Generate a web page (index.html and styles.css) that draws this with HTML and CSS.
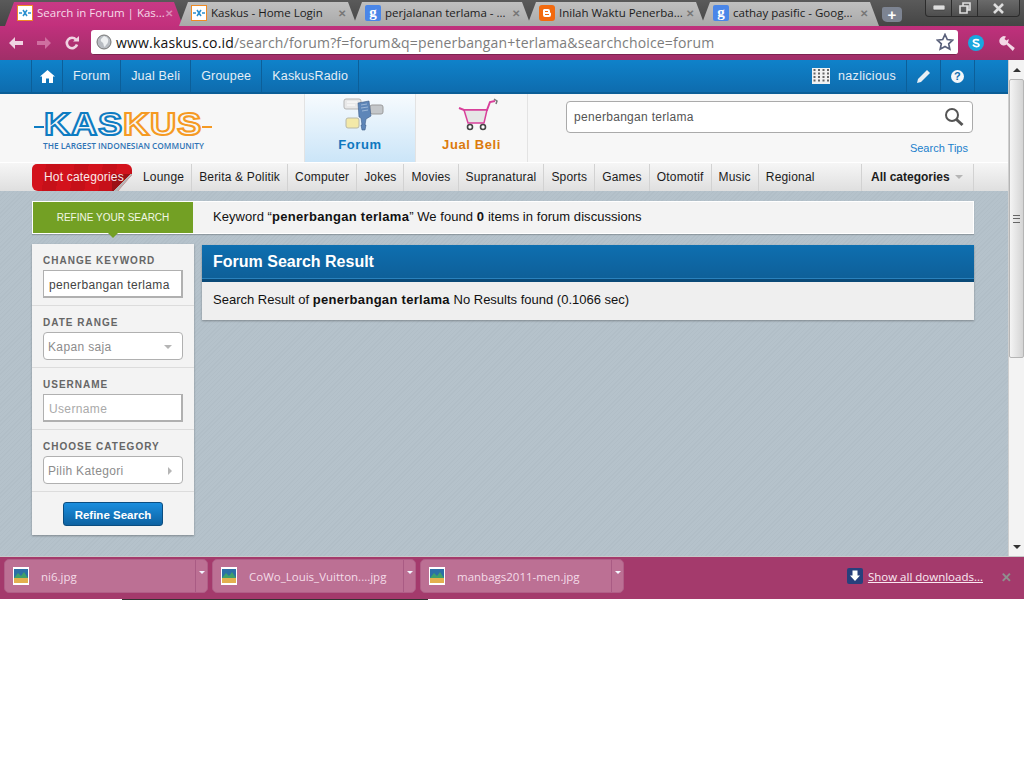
FILE: index.html
```html
<!DOCTYPE html>
<html lang="en">
<head>
    <meta charset="UTF-8">
    <title>Search in Forum | Kaskus</title>
    <link rel="stylesheet" href="styles.css">
</head>
<body>
    <div class="browser">
        <div class="tabstrip">
            <div class="tab active">
                <svg class="favicon" viewBox="0 0 16 16"><rect x="0.5" y="0.5" width="15" height="15" fill="#fff" stroke="#f08a24"/><path d="M2 8h3M11 8h3M6 5l4 6M10 5l-4 6" stroke="#2a8fd0" stroke-width="1.5" fill="none"/></svg>
                <span class="tab-title">Search in Forum | Kas...</span><span class="tab-x">✕</span>
            </div>
            <div class="tab">
                <svg class="favicon" viewBox="0 0 16 16"><rect x="0.5" y="0.5" width="15" height="15" fill="#fff" stroke="#f08a24"/><path d="M2 8h3M11 8h3M6 5l4 6M10 5l-4 6" stroke="#2a8fd0" stroke-width="1.5" fill="none"/></svg>
                <span class="tab-title">Kaskus - Home Login</span><span class="tab-x">✕</span>
            </div>
            <div class="tab">
                <span class="favicon g-icon">g</span>
                <span class="tab-title">perjalanan terlama - ...</span><span class="tab-x">✕</span>
            </div>
            <div class="tab">
                <svg class="favicon" viewBox="0 0 16 16"><rect width="16" height="16" rx="3" fill="#f26a0f"/><path d="M5 4h4a2 2 0 0 1 2 2v1a1 1 0 0 0 1 1v2a2 2 0 0 1-2 2H6a2 2 0 0 1-2-2V5z" fill="#fff"/><path d="M6 6.500h3M6 9.500h4" stroke="#f26a0f" stroke-width="1.2"/></svg>
                <span class="tab-title">Inilah Waktu Penerba...</span><span class="tab-x">✕</span>
            </div>
            <div class="tab">
                <span class="favicon g-icon">g</span>
                <span class="tab-title">cathay pasific - Goog...</span><span class="tab-x">✕</span>
            </div>
            <div class="newtab">+</div>
            <div class="winctl">
                <div class="winbtn"><svg width="12" height="6" viewBox="0 0 12 6"><rect width="12" height="5" rx="1" fill="#ddd" stroke="#333" stroke-width=".6"/></svg></div>
                <div class="winbtn"><svg width="12" height="12" viewBox="0 0 12 12"><path d="M4 1h7v7H9V4H4zM1 4h7v7H1z" fill="none" stroke="#ddd" stroke-width="1.6"/></svg></div>
                <div class="winbtn wide"><svg width="13" height="11" viewBox="0 0 13 11"><path d="M2 1l9 9M11 1l-9 9" stroke="#ddd" stroke-width="2.6"/></svg></div>
            </div>
        </div>

        <div class="toolbar">
            <svg class="tool-icon" viewBox="0 0 16 16"><path d="M1 8l6-6v4h8v4H7v4z" fill="#f0d3e2"/></svg>
            <svg class="tool-icon" viewBox="0 0 16 16"><path d="M15 8L9 2v4H1v4h8v4z" fill="#cf6fa0"/></svg>
            <svg class="tool-icon" viewBox="0 0 16 16"><path d="M13 9.500A5.200 5.200 0 1 1 12 4.600" fill="none" stroke="#f0d3e2" stroke-width="2.6"/><path d="M9 6.500h6V1z" fill="#f0d3e2"/></svg>
            <div class="omnibox">
                <svg class="globe" viewBox="0 0 16 16"><circle cx="8" cy="8" r="7" fill="#b8bcc2" stroke="#777"/><path d="M8 2c3 1 5 3 4 6s-2 2-3 5c-2-1-1-3-2-4S4 7 5 5z" fill="#eef0f2"/></svg>
                <span class="url"><b>www.kaskus.co.id</b>/search/forum?f=forum&amp;q=penerbangan+terlama&amp;searchchoice=forum</span>
                <svg class="star" viewBox="0 0 18 18"><path d="M9 1.500l2.300 5 5.400.6-4 3.700 1.100 5.400L9 13.500l-4.800 2.700 1.100-5.400-4-3.700 5.400-.6z" fill="#fff" stroke="#59607a" stroke-width="1.7"/></svg>
            </div>
            <svg class="skype" viewBox="0 0 16 16"><circle cx="8" cy="8" r="8" fill="#18a8e0"/><path d="M11 5.500C10 4.300 5.500 4 5.500 6.200c0 2.300 5.500 1.300 5.500 3.800 0 2.200-4.800 2-6-.3" fill="none" stroke="#fff" stroke-width="1.8"/></svg>
            <svg class="wrench" viewBox="0 0 18 18"><path d="M2 3.500a4 4 0 0 1 5-1L5.500 5l2 1.500L9.500 5a4 4 0 0 1-.7 3.500l7 5.500-2 3-6.300-6.500A4 4 0 0 1 2 3.500z" fill="#f3d8e6"/></svg>
        </div>

        <div class="viewport">
            <div class="page">
                <div class="topnav">
                    <a class="topnav-item home"><svg width="15" height="13" viewBox="0 0 15 13"><path d="M7.500 0L15 6.500h-2V13H9V8.500H6V13H2V6.500H0z" fill="#fff"/></svg></a>
                    <a class="topnav-item">Forum</a>
                    <a class="topnav-item">Jual Beli</a>
                    <a class="topnav-item">Groupee</a>
                    <a class="topnav-item">KaskusRadio</a>
                    <div class="topnav-right">
                        <svg class="avatar" viewBox="0 0 18 16"><rect width="18" height="16" fill="#f2f2f2"/><path d="M2.500 1v14M7 1v14M11.500 1v14M16 1v14" stroke="#666" stroke-width="2" stroke-dasharray="2 1.500"/></svg>
                        <a class="topnav-user">nazlicious</a>
                        <a class="topnav-icon"><svg width="14" height="14" viewBox="0 0 14 14"><path d="M0 14l1-4L10 1l3 3-9 9z" fill="#e8eef4"/></svg></a>
                        <a class="topnav-icon"><span class="help">?</span></a>
                    </div>
                </div>

                <div class="header">
                    <div class="logo">
                        <div class="logo-mark">
                            <span class="logo-dash blue"></span>
                            <div class="logo-word"><span class="logo-text">KAS</span><span class="logo-text orange-text">KUS</span></div>
                            <span class="logo-dash orange"></span>
                        </div>
                        <div class="logo-tag">THE LARGEST INDONESIAN COMMUNITY</div>
                    </div>
                    <div class="channel channel-forum">
                        <svg class="channel-icon forum-icon" width="42" height="34" viewBox="0 0 42 34">
                            <rect x="1" y="1" width="17" height="10" rx="2" fill="#e8e8e8" stroke="#b5b5b5"/>
                            <path d="M4 4h10M4 7h8" stroke="#fff"/>
                            <rect x="27" y="7" width="13" height="9" rx="2" fill="#c4c7ca" stroke="#9b9b9b"/>
                            <rect x="3" y="20" width="13" height="10" rx="2" fill="#f3e9a8" stroke="#b8b8a8"/>
                            <path d="M15 5l11-2 2 15-5 3-1 6h1l-1 5h-3l-1-5h1l-1-7-2-1z" fill="#5e86b8" stroke="#3c5d88" stroke-width=".6"/>
                            <path d="M18 7l6-1M18 10l7-1M19 13l6-1" stroke="#9db8d8"/>
                        </svg>
                        <span class="channel-label forum-label">Forum</span>
                    </div>
                    <div class="channel">
                        <svg class="channel-icon cart-icon" width="42" height="34" viewBox="0 0 42 34">
                            <path d="M2 10l5 2h23l3-8 5-1" fill="none" stroke="#d8409a" stroke-width="2"/>
                            <path d="M37 1l3 2-1 3" fill="none" stroke="#777" stroke-width="1.500"/>
                            <path d="M7 12h23l-3 13H11z" fill="#e6e6e6" stroke="#d8409a" stroke-width="1.500"/>
                            <circle cx="13" cy="29" r="2.500" fill="#fff" stroke="#444" stroke-width="1.600"/>
                            <circle cx="26" cy="29" r="2.500" fill="#fff" stroke="#444" stroke-width="1.600"/>
                        </svg>
                        <span class="channel-label jual-label">Jual Beli</span>
                    </div>
                    <div class="header-search">
                        <div class="searchbox">
                            <span>penerbangan terlama</span>
                            <svg width="20" height="20" viewBox="0 0 20 20"><circle cx="8" cy="8" r="6" fill="#fff" stroke="#555" stroke-width="2"/><path d="M12.500 12.500l6 5.500" stroke="#555" stroke-width="3"/></svg>
                        </div>
                        <a class="search-tips">Search Tips</a>
                    </div>
                </div>

                <div class="catbar">
                    <a class="hot">Hot categories</a>
                    <a class="cat">Lounge</a>
                    <a class="cat">Berita &amp; Politik</a>
                    <a class="cat">Computer</a>
                    <a class="cat">Jokes</a>
                    <a class="cat">Movies</a>
                    <a class="cat">Supranatural</a>
                    <a class="cat">Sports</a>
                    <a class="cat">Games</a>
                    <a class="cat">Otomotif</a>
                    <a class="cat">Music</a>
                    <a class="cat regional">Regional</a>
                    <a class="cat all">All categories <i class="caret"></i></a>
                </div>

                <div class="content">
                    <div class="refine-bar">
                        <div class="refine-tag">REFINE YOUR SEARCH</div>
                        <div class="refine-text">Keyword “<b>penerbangan terlama</b>” We found <b>0</b> items in forum discussions</div>
                    </div>
                    <div class="columns">
                        <div class="sidebar">
                            <div class="side-group">
                                <div class="side-label">CHANGE KEYWORD</div>
                                <div class="field square dark">penerbangan terlama</div>
                            </div>
                            <div class="side-group">
                                <div class="side-label">DATE RANGE</div>
                                <div class="field rounded grey">Kapan saja <i class="caret"></i></div>
                            </div>
                            <div class="side-group">
                                <div class="side-label">USERNAME</div>
                                <div class="field square light">Username</div>
                            </div>
                            <div class="side-group">
                                <div class="side-label">CHOOSE CATEGORY</div>
                                <div class="field rounded grey">Pilih Kategori <i class="caret-right"></i></div>
                            </div>
                            <div class="side-action"><button class="refine-btn">Refine Search</button></div>
                        </div>
                        <div class="result">
                            <div class="result-head">Forum Search Result</div>
                            <div class="result-body">Search Result of <b>penerbangan terlama</b> No Results found (0.1066 sec)</div>
                        </div>
                    </div>
                </div>
            </div>
            <div class="scrollbar">
                <div class="arrow-btn"><i class="arrow-up"></i></div>
                <div class="thumb"><span class="grip"></span></div>
                <div class="track"></div>
                <div class="arrow-btn"><i class="arrow-down"></i></div>
            </div>
        </div>

        <div class="downloads">
            <div class="dl-item"><svg class="dl-icon" viewBox="0 0 16 18"><rect width="16" height="18" fill="#fff"/><rect x="1" y="2" width="14" height="9" fill="#2c6fa6"/><path d="M1 11l4-5 3 3 3-4 4 6z" fill="#3fa06a"/><rect x="1" y="11" width="14" height="5" fill="#e3b04f"/></svg><span class="dl-name">ni6.jpg</span><span class="dl-more"><i></i></span></div>
            <div class="dl-item"><svg class="dl-icon" viewBox="0 0 16 18"><rect width="16" height="18" fill="#fff"/><rect x="1" y="2" width="14" height="9" fill="#2c6fa6"/><path d="M1 11l4-5 3 3 3-4 4 6z" fill="#3fa06a"/><rect x="1" y="11" width="14" height="5" fill="#e3b04f"/></svg><span class="dl-name">CoWo_Louis_Vuitton....jpg</span><span class="dl-more"><i></i></span></div>
            <div class="dl-item"><svg class="dl-icon" viewBox="0 0 16 18"><rect width="16" height="18" fill="#fff"/><rect x="1" y="2" width="14" height="9" fill="#2c6fa6"/><path d="M1 11l4-5 3 3 3-4 4 6z" fill="#3fa06a"/><rect x="1" y="11" width="14" height="5" fill="#e3b04f"/></svg><span class="dl-name">manbags2011-men.jpg</span><span class="dl-more"><i></i></span></div>
            <div class="dl-all">
                <svg width="16" height="16" viewBox="0 0 16 16"><rect width="16" height="16" rx="2" fill="#27407c"/><path d="M5.500 2.500h5v5H13l-5 5.500-5-5.500h2.500z" fill="#fff"/></svg>
                <a class="dl-link">Show all downloads...</a>
            </div>
            <span class="dl-close">✕</span>
        </div>
        <div class="blank"><span class="blank-line"></span></div>
    </div>
</body>
</html>
```

FILE: styles.css
```css
html, body {
    margin: 0;
    padding: 0;
    background: #fff;
}
.browser {
    width: 1024px;
    height: 770px;
    overflow: hidden;
    display: flex;
    flex-direction: column;
    font-family: "Liberation Sans", Arial, sans-serif;
}

/* chrome tabs */
.tabstrip {
    height: 26px;
    background: linear-gradient(#5a5a5a, #454545);
    display: flex;
    align-items: flex-end;
    padding-left: 5px;
    box-sizing: border-box;
}
.tab {
    width: 178px;
    margin-right: -4px;
    height: 24px;
    box-sizing: border-box;
    padding: 0 11px 3px 12px;
    display: flex;
    align-items: center;
    background: linear-gradient(#c0c0c0, #a9a9a9);
    clip-path: polygon(0 100%, 9px 0, calc(100% - 9px) 0, 100% 100%);
    font-family: "Open Sans", sans-serif;
    font-size: 11.5px;
    color: #1c1c1c;
}
.tab.active {
    background: linear-gradient(#c83a86, #c2307c);
    color: #f6dbe9;
}
.favicon {
    width: 16px;
    height: 16px;
    flex: none;
    margin-right: 4px;
}
.g-icon {
    background: #4a86e8;
    color: #fff;
    border-radius: 2px;
    font: bold 15px/14px "Liberation Serif", serif;
    text-align: center;
}
.tab-title {
    flex: 1;
    white-space: nowrap;
}
.tab-x {
    font-size: 10px;
    color: #777;
    font-weight: bold;
}
.tab.active .tab-x {
    color: #dc8cb8;
}
.newtab {
    width: 20px;
    height: 15px;
    margin: 0 0 4px 7px;
    background: #7d8492;
    border-radius: 2px 4px 4px 5px;
    color: #fff;
    font: bold 15px/15px "Liberation Sans", sans-serif;
    text-align: center;
}
.winctl {
    margin-left: auto;
    margin-right: 4px;
    align-self: flex-start;
    display: flex;
    height: 16px;
    border: 1px solid #2c2c2c;
    border-top: 0;
    border-radius: 0 0 4px 4px;
    background: linear-gradient(#6a6a6a, #4e4e4e);
}
.winbtn {
    width: 25px;
    display: flex;
    align-items: center;
    justify-content: center;
    border-right: 1px solid #2c2c2c;
}
.winbtn.wide {
    width: 41px;
    border-right: 0;
}

/* toolbar */
.toolbar {
    height: 34px;
    box-sizing: border-box;
    padding: 4px 7px 5px 8px;
    background: linear-gradient(#c0307c, #a02f68);
    display: flex;
    align-items: center;
}
.tool-icon {
    width: 16px;
    height: 16px;
    margin-right: 12px;
}
.omnibox {
    width: 867px;
    height: 25px;
    margin-left: -1px;
    box-sizing: border-box;
    padding: 0 4px 0 5px;
    background: #fff;
    border-radius: 3px;
    border-bottom: 1px solid #7c2350;
    display: flex;
    align-items: center;
}
.globe {
    width: 16px;
    height: 16px;
    margin-right: 4px;
}
.url {
    flex: 1;
    font-family: "Open Sans", sans-serif;
    font-size: 14px;
    letter-spacing: 0.17px;
    color: #7d7d7d;
    white-space: nowrap;
}
.url b {
    font-weight: normal;
    color: #111;
}
.star {
    width: 18px;
    height: 18px;
}
.skype {
    width: 16px;
    height: 16px;
    margin-left: 10px;
}
.wrench {
    width: 18px;
    height: 18px;
    margin-left: 15px;
}

/* page */
.viewport {
    height: 496px;
    display: flex;
}
.page {
    width: 1008px;
    height: 496px;
    overflow: hidden;
    background-color: #b3c0c9;
    background-image: repeating-linear-gradient(135deg, #b1bec7 0, #b1bec7 1px, #b5c2cb 1px, #b5c2cb 3px);
}
.topnav {
    height: 34px;
    box-sizing: border-box;
    padding: 0 33px 0 31px;
    background: linear-gradient(#0f82ca, #0e6cae);
    border-bottom: 2px solid #0b5e97;
    display: flex;
    align-items: stretch;
    color: #e4eef6;
    font-size: 12.5px;
    letter-spacing: 0.2px;
}
.topnav-item {
    display: flex;
    align-items: center;
    padding: 0 10px;
    border-right: 1px solid #0c5f99;
}
.topnav-item.home {
    width: 32px;
    box-sizing: border-box;
    justify-content: center;
    padding: 0;
    border-left: 1px solid #0c5f99;
}
.topnav-right {
    margin-left: auto;
    display: flex;
    align-items: stretch;
}
.avatar {
    width: 18px;
    height: 16px;
    align-self: center;
    margin-right: 8px;
}
.topnav-user {
    display: flex;
    align-items: center;
    padding-right: 10px;
    border-right: 1px solid #0c5f99;
    letter-spacing: 0.3px;
}
.topnav-icon {
    width: 34px;
    box-sizing: border-box;
    display: flex;
    align-items: center;
    justify-content: center;
    border-right: 1px solid #0c5f99;
}
.help {
    width: 13px;
    height: 13px;
    border-radius: 50%;
    background: #f2f6fa;
    color: #0e6cae;
    font: bold 11px/13px "Liberation Sans", sans-serif;
    text-align: center;
}
.header {
    height: 68px;
    background: #f7f7f7;
    display: flex;
}
.logo {
    width: 304px;
    padding: 18px 0 0 34px;
    box-sizing: border-box;
}
.logo-mark {
    display: flex;
    align-items: center;
    height: 26px;
}
.logo-word {
    width: 158px;
    height: 26px;
    white-space: nowrap;
    transform: scaleX(1.17);
    transform-origin: left center;
}
.logo-text {
    font: bold 31px/26px "Liberation Sans", sans-serif;
    letter-spacing: 0.7px;
    color: #f7f7f7;
    -webkit-text-stroke: 2px #0e7cc2;
}
.orange-text {
    -webkit-text-stroke-color: #f59a23;
}
.logo-dash {
    width: 10px;
    height: 2px;
    margin-top: 3px;
}
.logo-dash.blue {
    background: #0e7cc2;
}
.logo-dash.orange {
    background: #f59a23;
}
.logo-tag {
    margin: 3px 0 0 9px;
    font: 600 8.3px/10px "Open Sans", sans-serif;
    color: #2f74b5;
    white-space: nowrap;
}
.channel {
    width: 111px;
    border-left: 1px solid #e3e3e3;
    display: flex;
    flex-direction: column;
    align-items: center;
    box-sizing: border-box;
}
.channel + .channel {
    border-right: 1px solid #e3e3e3;
    width: 113px;
}
.channel-forum {
    background: linear-gradient(#f7fbfe, #cbe5f8);
}
.channel-icon {
    margin-top: 4px;
}
.forum-icon {
    margin-left: 8px;
}
.cart-icon {
    margin-left: 12px;
}
.channel-label {
    margin-top: 5px;
    font-size: 13px;
    font-weight: bold;
    letter-spacing: 0.6px;
}
.forum-label {
    color: #0e78bf;
}
.jual-label {
    color: #dc7a0c;
}
.header-search {
    margin-left: 38px;
    margin-top: 7px;
    width: 407px;
    display: flex;
    flex-direction: column;
}
.searchbox {
    height: 32px;
    box-sizing: border-box;
    background: #fff;
    border: 1px solid #aaa;
    border-radius: 4px;
    padding: 0 8px 0 7px;
    display: flex;
    align-items: center;
    justify-content: space-between;
    font-size: 12px;
    letter-spacing: 0.3px;
    color: #555;
}
.search-tips {
    align-self: flex-end;
    margin: 9px 5px 0 0;
    font-size: 11px;
    color: #1b80cc;
}
.catbar {
    height: 29px;
    box-sizing: border-box;
    padding: 1px 34px 0 32px;
    background: linear-gradient(#f6f6f6, #dfdfdf);
    border-top: 1px solid #fff;
    display: flex;
    align-items: stretch;
    font-size: 12px;
    letter-spacing: 0.18px;
    color: #1c1c1c;
}
.hot {
    width: 100px;
    box-sizing: border-box;
    padding: 0 0 2px 12px;
    display: flex;
    align-items: center;
    color: #fbe9e9;
    white-space: nowrap;
    background: repeating-linear-gradient(100deg, #d3121c 0, #d3121c 14px, #c61019 14px, #c61019 28px);
    border-radius: 5px 6px 0 6px;
    position: relative;
    clip-path: polygon(0 0, 100% 0, 100% 40%, 86% 100%, 0 100%);
}
.hot::after {
    content: "";
    position: absolute;
    z-index: -1;
    right: 0;
    bottom: 0;
    width: 20px;
    height: 17px;
    background: linear-gradient(135deg, #9c1015 50%, #b5b5b5 50%);
}
.cat {
    display: flex;
    align-items: center;
    padding: 0 7px 2px;
    border-right: 1px solid #d2d2d2;
    white-space: nowrap;
}
.hot + .cat {
    padding-left: 11px;
}
.cat.regional {
    border-right: 0;
}
.cat.all {
    margin-left: auto;
    width: 113px;
    box-sizing: border-box;
    padding-left: 9px;
    font-weight: bold;
    letter-spacing: 0;
    border-left: 1px solid #d2d2d2;
    border-right: 1px solid #d2d2d2;
}
.caret {
    display: inline-block;
    border: 4px solid transparent;
    border-top-color: #b5b5b5;
    border-bottom: 0;
    margin-left: 5px;
}
.caret-right {
    display: inline-block;
    border: 4px solid transparent;
    border-left-color: #b5b5b5;
    border-right: 0;
}
.content {
    padding: 10px 34px 0 32px;
}
.refine-bar {
    height: 33px;
    box-sizing: border-box;
    background: #f3f3f3;
    border: 1px solid #fff;
    box-shadow: 0 1px 1px rgba(0, 0, 0, 0.2);
    display: flex;
    align-items: center;
    position: relative;
}
.refine-tag {
    width: 160px;
    height: 31px;
    background: #73a024;
    color: #f2f7e4;
    font-size: 10px;
    line-height: 31px;
    text-align: center;
    position: relative;
}
.refine-tag::after {
    content: "";
    position: absolute;
    left: 75px;
    bottom: -5px;
    border: 5px solid transparent;
    border-top-color: #73a024;
    border-bottom: 0;
}
.refine-text {
    margin-left: 20px;
    padding-bottom: 2px;
    font-size: 13px;
    letter-spacing: 0.05px;
    color: #111;
}
.refine-text b, .result-body b {
    letter-spacing: 0.3px;
}
.columns {
    margin-top: 10px;
    display: flex;
    align-items: flex-start;
    gap: 8px;
}
.sidebar {
    width: 162px;
    background: #f3f3f3;
    box-shadow: 0 1px 2px rgba(0, 0, 0, 0.3);
}
.side-group {
    height: 62px;
    box-sizing: border-box;
    padding: 11px 11px 0;
    border-bottom: 1px solid #dcdcdc;
}
.side-label {
    font-size: 10px;
    line-height: 12px;
    font-weight: bold;
    letter-spacing: 1px;
    color: #666;
    margin-bottom: 3px;
}
.field {
    height: 28px;
    box-sizing: border-box;
    background: #fff;
    padding: 1px 5px 0;
    font-size: 12px;
    letter-spacing: 0.35px;
    display: flex;
    align-items: center;
    justify-content: space-between;
}
.field.square {
    padding-top: 2px;
    border: 2px solid #b0b0b0;
    border-top-width: 1px;
    border-left-width: 1px;
}
.field.rounded {
    border: 1px solid #b0b0b0;
    border-radius: 4px;
    padding-left: 4px;
    padding-right: 10px;
}
.field.dark {
    color: #444;
}
.field.grey {
    color: #8c8c8c;
}
.field.light {
    color: #aaa;
}
.side-action {
    height: 43px;
    display: flex;
    justify-content: center;
    align-items: flex-start;
    padding-top: 10px;
    box-sizing: border-box;
}
.refine-btn {
    width: 100px;
    height: 24px;
    padding: 1px 0 0;
    border: 1px solid #0b4d80;
    border-radius: 3px;
    background: linear-gradient(#1b8ede, #0d62a2);
    color: #fff;
    font: bold 11.5px "Liberation Sans", sans-serif;
}
.result {
    width: 772px;
    margin-top: 1px;
    background: #efefef;
    box-shadow: 0 1px 2px rgba(0, 0, 0, 0.3);
}
.result-head {
    height: 37px;
    box-sizing: border-box;
    padding-left: 11px;
    background: linear-gradient(#0e6fb0, #0e5f98);
    border-bottom: 3px solid #0a4a78;
    box-shadow: inset 0 -1px 0 #2a82bd;
    color: #fff;
    font-size: 16px;
    font-weight: bold;
    line-height: 33px;
}
.result-body {
    height: 38px;
    box-sizing: border-box;
    padding: 10px 11px;
    font-size: 13px;
    line-height: 15px;
    color: #111;
}

/* scrollbar */
.scrollbar {
    width: 16px;
    height: 496px;
    display: flex;
    flex-direction: column;
    background: #f3f3f3;
    border-left: 1px solid #cfcfcf;
    box-sizing: border-box;
}
.arrow-btn {
    height: 19px;
    display: flex;
    align-items: center;
    justify-content: center;
}
.arrow-up {
    border: 4px solid transparent;
    border-bottom-color: #333;
    border-top: 0;
}
.arrow-down {
    border: 4px solid transparent;
    border-top-color: #333;
    border-bottom: 0;
}
.thumb {
    height: 279px;
    box-sizing: border-box;
    background: linear-gradient(90deg, #f4f4f4, #d4d4d4);
    border: 1px solid #b5b5b5;
    border-radius: 2px;
    display: flex;
    align-items: center;
    justify-content: center;
}
.grip {
    width: 7px;
    height: 6px;
    border-top: 1px solid #666;
    border-bottom: 1px solid #666;
    background: linear-gradient(#666, #666) center/100% 1px no-repeat;
}
.track {
    flex: 1;
}

/* download shelf */
.downloads {
    height: 43px;
    box-sizing: border-box;
    padding: 2px 0 0 4px;
    background: #a43a6c;
    border-top: 1px solid #c8c8c8;
    display: flex;
    align-items: flex-start;
    gap: 4px;
    font-family: "Open Sans", sans-serif;
    font-size: 11.5px;
    color: #f4dce8;
}
.dl-item {
    width: 204px;
    height: 34px;
    box-sizing: border-box;
    background: #bc7094;
    border: 1px solid #b05f87;
    border-radius: 5px;
    display: flex;
    align-items: center;
}
.dl-icon {
    width: 16px;
    height: 18px;
    margin-left: 8px;
}
.dl-name {
    margin-left: 12px;
    flex: 1;
    white-space: nowrap;
}
.dl-more {
    width: 12px;
    height: 100%;
    border-left: 1px solid #a95b84;
    display: flex;
    justify-content: center;
    padding-top: 11px;
    box-sizing: border-box;
}
.dl-more i {
    border: 3px solid transparent;
    border-top-color: #f3f6ff;
    border-bottom: 0;
    height: 0;
}
.dl-all {
    margin-left: auto;
    margin-top: 9px;
    display: flex;
    align-items: center;
    gap: 5px;
}
.dl-link {
    text-decoration: underline;
    color: #fbeaf2;
    font-size: 11.5px;
}
.dl-close {
    margin: 9px 12px 0 14px;
    font-size: 13px;
    font-weight: bold;
    color: #8f8f8f;
}
.blank {
    flex: 1;
    background: #fff;
}
.blank-line {
    display: block;
    width: 306px;
    height: 1px;
    margin-left: 122px;
    background: #333;
}
```
